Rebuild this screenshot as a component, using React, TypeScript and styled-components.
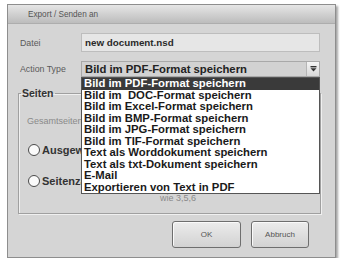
import React from "react";
import styled, { createGlobalStyle } from "styled-components";

const Global = createGlobalStyle`
  html, body { margin: 0; padding: 0; background: #ffffff; }
  body { font-family: "Liberation Sans", Arial, sans-serif; }
`;

const Dialog = styled.div`
  margin: 4px 0 0 7px;
  width: 329px;
  height: 254px;
  box-sizing: border-box;
  background: #d5d5d5;
  border: 1px solid #8e8e8e;
  box-shadow: 2px 2px 2px rgba(0, 0, 0, 0.35);
  display: flex;
  flex-direction: column;
`;

const TitleBar = styled.div`
  height: 18px;
  flex: none;
  display: flex;
  align-items: center;
  padding-left: 20px;
  background: linear-gradient(#e6e6e6, #bcbcbc);
  border-bottom: 1px solid #adadad;
  color: #555;
  font-size: 8.2px;
`;

const Body = styled.div`
  position: relative;
  flex: 1;
  display: flex;
  flex-direction: column;
  padding: 9px 0 0 12px;
`;

const Row = styled.div<{ $mt?: number }>`
  display: flex;
  align-items: center;
  margin-top: ${(p) => p.$mt ?? 0}px;
`;

const Label = styled.div`
  width: 61px;
  color: #5a5a5a;
  font-size: 8.8px;
`;

const Input = styled.div`
  width: 239px;
  height: 19px;
  box-sizing: border-box;
  background: #e6e6e6;
  border: 1px solid #bdbdbd;
  display: flex;
  align-items: center;
  padding-left: 3px;
  font-weight: bold;
  font-size: 9.8px;
  color: #2a2a2a;
`;

const SelectWrap = styled.div`
  position: relative;
  width: 239px;
`;

const Select = styled.div`
  height: 16px;
  box-sizing: border-box;
  background: #d2d2d2;
  border: 1px solid #a9a9a9;
  display: flex;
  align-items: center;
  justify-content: space-between;
  padding-left: 3px;
  font-weight: bold;
  font-size: 11.3px;
  color: #222;
`;

const DropButton = styled.div`
  width: 12px;
  height: 14px;
  background: linear-gradient(#f4f4f4, #d8d8d8);
  border-left: 1px solid #b5b5b5;
  display: flex;
  align-items: center;
  justify-content: center;
`;

const List = styled.div`
  position: absolute;
  left: 0;
  top: 100%;
  width: 239px;
  box-sizing: border-box;
  background: #ffffff;
  border: 1px solid #555;
  z-index: 2;
`;

const Item = styled.div<{ $active?: boolean }>`
  height: 11.5px;
  line-height: 11.5px;
  padding-left: 2px;
  font-weight: bold;
  font-size: 11.3px;
  white-space: nowrap;
  color: ${(p) => (p.$active ? "#ffffff" : "#1a1a1a")};
  background: ${(p) => (p.$active ? "#3a3a3a" : "transparent")};
`;

const Fieldset = styled.fieldset`
  margin: 10px 0 0 -2px;
  width: 303px;
  height: 127px;
  box-sizing: border-box;
  border: 1px solid #a0a0a0;
  box-shadow: inset 1px 1px 0 #f0f0f0, 1px 1px 0 #f0f0f0;
  padding: 0 0 0 8px;
  display: flex;
  flex-direction: column;
`;

const Legend = styled.legend`
  padding: 0 1px;
  margin-left: -6px;
  font-weight: bold;
  font-size: 10.5px;
  color: #333;
`;

const Hint = styled.div<{ $mt: number; $ml?: number }>`
  margin-top: ${(p) => p.$mt}px;
  margin-left: ${(p) => p.$ml ?? 0}px;
  color: #8a8a8a;
  font-size: 9px;
`;

const RadioRow = styled.div<{ $mt: number }>`
  display: flex;
  align-items: center;
  gap: 2px;
  margin-top: ${(p) => p.$mt}px;
  margin-left: 1px;
  font-size: 11px;
  font-weight: bold;
  color: #333;
`;

const Radio = styled.span`
  width: 10px;
  height: 10px;
  border-radius: 50%;
  background: #fafafa;
  border: 1px solid #4a4a4a;
`;

const Buttons = styled.div`
  display: flex;
  gap: 10px;
  margin: 7px 0 0 152px;
`;

const Button = styled.div<{ $w: number }>`
  width: ${(p) => p.$w}px;
  height: 27px;
  box-sizing: border-box;
  border: 1px solid #6e6e6e;
  border-radius: 3px;
  background: linear-gradient(#ececec, #d2d2d2);
  box-shadow: inset 1px 1px 0 #fafafa;
  display: flex;
  align-items: center;
  justify-content: center;
  font-size: 8px;
  color: #555;
`;

const items = [
  "Bild im PDF-Format speichern",
  "Bild im  DOC-Format speichern",
  "Bild im Excel-Format speichern",
  "Bild im BMP-Format speichern",
  "Bild im JPG-Format speichern",
  "Bild im TIF-Format speichern",
  "Text als Worddokument speichern",
  "Text als txt-Dokument speichern",
  "E-Mail",
  "Exportieren von Text in PDF",
];

export default function App() {
  return (
    <>
      <Global />
      <Dialog>
        <TitleBar>Export / Senden an</TitleBar>
        <Body>
          <Row>
            <Label>Datei</Label>
            <Input>new document.nsd</Input>
          </Row>
          <Row $mt={9}>
            <Label>Action Type</Label>
            <SelectWrap>
              <Select>
                <span>Bild im PDF-Format speichern</span>
                <DropButton>
                  <svg width="7" height="6" viewBox="0 0 7 6">
                    <rect x="0.5" y="0" width="6" height="1.4" fill="#333" />
                    <path d="M0.5 2.2 L6.5 2.2 L3.5 5.5 Z" fill="#333" />
                  </svg>
                </DropButton>
              </Select>
              <List>
                {items.map((t, i) => (
                  <Item key={t} $active={i === 0}>
                    {t.replace(/ /g, "\u00a0")}
                  </Item>
                ))}
              </List>
            </SelectWrap>
          </Row>
          <Fieldset>
            <Legend>Seiten</Legend>
            <Hint $mt={17}>Gesamtseiten</Hint>
            <RadioRow $mt={18}>
              <Radio />
              Ausgewählt
            </RadioRow>
            <RadioRow $mt={19}>
              <Radio />
              Seitenzahl
            </RadioRow>
            <Hint $mt={6} $ml={133}>wie 3,5,6</Hint>
          </Fieldset>
          <Buttons>
            <Button $w={69}>OK</Button>
            <Button $w={58}>Abbruch</Button>
          </Buttons>
        </Body>
      </Dialog>
    </>
  );
}
